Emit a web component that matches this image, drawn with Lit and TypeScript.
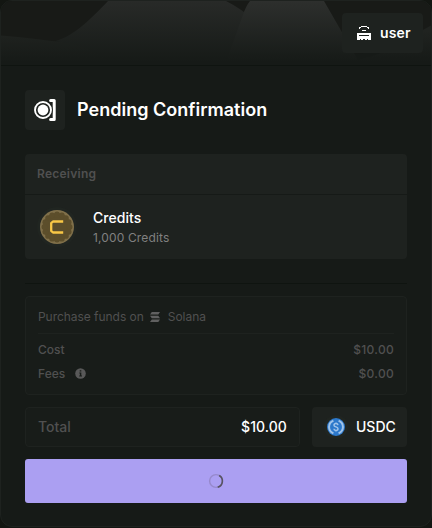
import { LitElement, html, css, svg } from "lit";
import { customElement } from "lit/decorators.js";

const banner = svg`
  <svg class="banner" viewBox="0 0 430 65" width="430" height="65" preserveAspectRatio="none">
    <defs>
      <linearGradient id="haze" gradientUnits="userSpaceOnUse" x1="0" y1="0" x2="0" y2="62">
        <stop offset="0" stop-color="#282a28" /><stop offset="1" stop-color="#161a17" />
      </linearGradient>
      <linearGradient id="peak" gradientUnits="userSpaceOnUse" x1="0" y1="0" x2="0" y2="62">
        <stop offset="0" stop-color="#2d2f2d" /><stop offset="1" stop-color="#161a17" />
      </linearGradient>
      <linearGradient id="low" gradientUnits="userSpaceOnUse" x1="0" y1="30" x2="0" y2="62">
        <stop offset="0" stop-color="#202320" /><stop offset="1" stop-color="#161a17" />
      </linearGradient>
    </defs>
    <rect width="430" height="65" fill="#161a17" />
    <path d="M0 0H430V45L300 60H80L0 36Z" fill="#181a17" />
    <path d="M0 35C24 37 40 39 54 41C80 43 92 49 120 62H0Z" fill="url(#low)" />
    <path d="M107 0C91 17 74 35 54 41C78 44 91 50 108 62H260V26Q243 9 225 0Z" fill="url(#haze)" />
    <path d="M249 0Q245 5 242 14L225 62H358Q344 37 323 0Z" fill="url(#peak)" />
    <path d="M340 62Q385 58 421 30L430 25V62Z" fill="url(#low)" />
  </svg>`;

const userIcon = svg`
  <svg width="14" height="14" viewBox="0 0 14 14" fill="#fff" shape-rendering="crispEdges">
    <path d="M4 0h6v1H4zM2 1h2v1H2zM10 1h2v1h-2zM2 2h1v1H2zM11 2h1v1h-1zM5 4h4v1H5z" />
    <path d="M0 7h14v7h-3v-1h-1v1H8v-1H6v1H4v-1H3v1H0z" />
    <path d="M2 9h10v1H2z" fill="#1e221f" />
  </svg>`;

const markIcon = svg`
  <svg width="23" height="25" viewBox="0 0 23 25" fill="none">
    <path d="M17.6 3.5H21.2V22.5H17.6" stroke="#fff" stroke-width="3" stroke-linejoin="round" stroke-linecap="round" />
    <circle cx="10" cy="13" r="9.9" fill="#1e221f" />
    <circle cx="10" cy="13" r="8" stroke="#fff" stroke-width="1.9" />
    <circle cx="10" cy="13" r="5.4" fill="#fff" />
  </svg>`;

const scallops = Array.from({ length: 16 }, (_, i) => {
  const a = (i * Math.PI) / 8;
  return svg`<circle cx=${20 + 12.6 * Math.cos(a)} cy=${20 + 12.6 * Math.sin(a)} r="2.9" fill="#5c4e2b" />`;
});

const coin = svg`
  <svg width="40" height="40" viewBox="0 0 40 40" fill="none">
    <circle cx="20" cy="20" r="20" fill="#202521" />
    <circle cx="20" cy="20" r="17" fill="#80704a" />
    <circle cx="20" cy="20" r="13.8" fill="#5c4e2b" />
    ${scallops}
    <path d="M26.2 14.5H16L14.2 16.2V23.8L16 25.5H26.2" stroke="#f9c846" stroke-width="2.3" stroke-linejoin="round" />
  </svg>`;

const solana = svg`
  <svg width="10" height="10" viewBox="0 0 10 10" fill="#606060">
    <path d="M1.8 0H10L8.3 2.6H0zM0 3.7H8.3L10 6.3H1.8zM1.8 7.4H10L8.3 10H0z" />
  </svg>`;

const info = svg`
  <svg width="11" height="11" viewBox="0 0 11 11">
    <circle cx="5.5" cy="5.5" r="5.3" fill="#585858" />
    <path d="M4.7 2.3h1.6v1.3H4.7zM4.3 4.6h2v3h.7v1H4.2v-1h.7V5.5h-.6z" fill="#181c19" />
  </svg>`;

const usdc = svg`
  <svg width="24" height="24" viewBox="0 0 24 24" fill="none">
    <circle cx="12" cy="12" r="12" fill="#202521" />
    <circle cx="12" cy="12" r="9" fill="#2c78cb" />
    <path d="M9.4 5.8A6.6 6.6 0 0 0 9.4 18.2M14.6 5.8A6.6 6.6 0 0 1 14.6 18.2" stroke="#9fc3e9" stroke-width="2" />
    <path d="M14 10.2C13.7 7.9 10 8 10 10.2C10 12.4 14 11.4 14 13.8C14 16 10.1 16.1 9.9 13.8M12 7.4V8.5M12 15.5V16.6" stroke="#9fc3e9" stroke-width="1.5" />
  </svg>`;

const spinner = svg`
  <svg width="16" height="16" viewBox="0 0 16 16" fill="none">
    <circle cx="8" cy="8" r="6.4" stroke="#9689cc" stroke-width="1.4" />
    <path d="M11.2 2.46A6.4 6.4 0 0 1 9.7 14.17" stroke="#575361" stroke-width="1.6" />
  </svg>`;

@customElement("app-root")
export class AppRoot extends LitElement {
  static styles = css`
    :host {
      display: block;
      width: 432px;
      height: 528px;
      overflow: hidden;
      background: #131612;
      font-family: Inter, "Noto Sans", sans-serif;
      font-size: 12px;
      font-weight: 500;
      color: #505050;
    }
    * { box-sizing: border-box; }
    svg { display: block; flex: none; }
    .panel {
      width: 432px;
      height: 527px;
      border: 1px solid #1e221f;
      border-radius: 12px;
      background: #161a17;
      overflow: hidden;
    }
    .top {
      position: relative;
      height: 65px;
      border-bottom: 1px solid #0f1410;
      display: flex;
      justify-content: flex-end;
      padding: 12px 8px 0 0;
    }
    .banner { position: absolute; inset: 0; height: 64px; }
    .user {
      position: relative;
      width: 81px;
      height: 40px;
      display: flex;
      align-items: center;
      gap: 9px;
      padding-left: 15px;
      border-radius: 4px;
      background: #1e221f;
      color: #fff;
      font-size: 14px;
      font-weight: 600;
      letter-spacing: .15px;
    }
    .user span { padding-bottom: 2px; }
    .body { padding: 24px 24px 0; }
    .heading { display: flex; align-items: center; gap: 12px; height: 40px; }
    .mark {
      width: 40px;
      height: 40px;
      padding: 7px 0 0 8px;
      border-radius: 4px;
      background: #1e221f;
    }
    h1 { margin: 0; font-size: 18px; line-height: 24px; font-weight: 600; color: #fff; letter-spacing: .02px; }
    .receiving { margin-top: 24px; height: 105px; border-radius: 4px; background: #1e221f; overflow: hidden; }
    .label {
      height: 41px;
      line-height: 40px;
      padding-left: 12px;
      border-bottom: 1px solid #161a17;
      font-weight: 600;
      letter-spacing: .25px;
    }
    .item { display: flex; align-items: center; gap: 16px; height: 64px; padding-left: 12px; }
    .text { padding-top: 2px; }
    .name { font-size: 14px; line-height: 20px; color: #fff; letter-spacing: .05px; }
    .qty { font-size: 12px; line-height: 20px; font-weight: 400; color: #808080; letter-spacing: .14px; }
    .rule { margin-top: 24px; height: 1px; background: #0f1410; }
    .costs {
      margin-top: 12px;
      height: 99px;
      padding: 0 12px;
      border: 1px solid #1e221f;
      border-radius: 4px;
      background: #181c19;
    }
    .funds { display: flex; align-items: center; height: 37px; padding-top: 3px; border-bottom: 1px solid #1e221f; font-weight: 400; letter-spacing: -.04px; }
    .funds svg { margin: 0 8px 0 6px; }
    .row { display: flex; align-items: center; justify-content: space-between; height: 24px; }
    .row:nth-child(2) { margin-top: 3px; }
    .price { letter-spacing: .3px; }
    .fees { display: flex; align-items: center; gap: 10px; }
    .pay { display: flex; gap: 12px; margin-top: 12px; height: 40px; font-size: 14px; }
    .total {
      flex: 1;
      display: flex;
      align-items: center;
      justify-content: space-between;
      padding: 0 12px;
      border: 1px solid #1e221f;
      border-radius: 4px;
      background: #181c19;
    }
    .white { color: #fff; letter-spacing: .08px; }
    .coin {
      display: flex;
      align-items: center;
      gap: 8px;
      width: 95px;
      padding-left: 12px;
      border-radius: 4px;
      background: #1e221f;
      color: #fff;
    }
    .coin span, .total span { padding-bottom: 1px; }
    .button {
      display: flex;
      align-items: center;
      justify-content: center;
      width: 100%;
      height: 44px;
      margin: 12px 0 0;
      padding: 0;
      border: 0;
      border-radius: 3px;
      background: #ab9ff2;
    }
  `;

  render() {
    return html`
      <main class="panel">
        <header class="top">
          ${banner}
          <div class="user">${userIcon}<span>user</span></div>
        </header>
        <div class="body">
          <div class="heading">
            <div class="mark">${markIcon}</div>
            <h1>Pending Confirmation</h1>
          </div>
          <section class="receiving">
            <div class="label">Receiving</div>
            <div class="item">
              ${coin}
              <div class="text"><div class="name">Credits</div><div class="qty">1,000 Credits</div></div>
            </div>
          </section>
          <div class="rule"></div>
          <section class="costs">
            <div class="funds"><span>Purchase funds on</span>${solana}<span>Solana</span></div>
            <div class="row"><span>Cost</span><span class="price">$10.00</span></div>
            <div class="row"><span class="fees">Fees ${info}</span><span class="price">$0.00</span></div>
          </section>
          <div class="pay">
            <div class="total"><span>Total</span><span class="white">$10.00</span></div>
            <div class="coin">${usdc}<span>USDC</span></div>
          </div>
          <button class="button" aria-label="Loading">${spinner}</button>
        </div>
      </main>
    `;
  }
}
